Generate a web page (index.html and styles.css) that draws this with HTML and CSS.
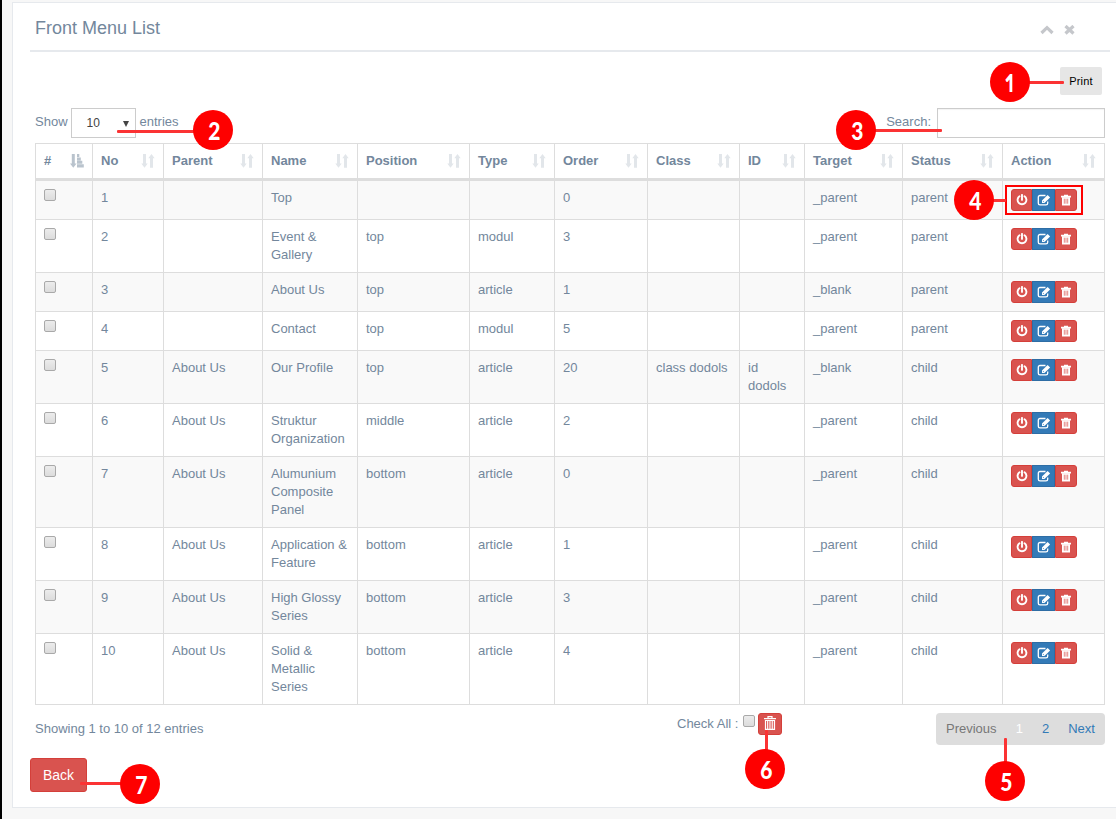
FILE: index.html
```html
<!DOCTYPE html>
<html lang="en">
<head>
<meta charset="utf-8">
<title>Front Menu List</title>
<link rel="stylesheet" href="styles.css">
</head>
<body>
<svg class="defs" width="0" height="0">
  <symbol id="sort" viewBox="0 0 14 14"><path d="M2 0h3v9.500H6.700L3.500 13.700.3 9.500H2zM9 13.700V4.200H7.300L10.500 0l3.200 4.200H12v9.500z"/></symbol>
  <symbol id="sort-asc" viewBox="0 0 14 14"><path d="M1.800 0h3v9.500h1.800L3.300 13.700 0 9.500h1.800zM7 0h2.300v3H7zM7 3.400h3.800v3H7zM7 6.800h5.300v3H7zM7 10.200h6.800v3.200H7z"/></symbol>
  <symbol id="power" viewBox="0 0 12 12"><path d="M6 .9v5M3.500 2.300a4.400 4.400 0 1 0 5 0" fill="none" stroke="#fff" stroke-width="1.900" stroke-linecap="round"/></symbol>
  <symbol id="edit" viewBox="0 0 14 12"><path d="M8.500 1.500H3A1.700 1.700 0 0 0 1.300 3.200v6A1.700 1.700 0 0 0 3 10.900h6a1.700 1.700 0 0 0 1.700-1.700V7.500" fill="none" stroke="#fff" stroke-width="1.300"/><path d="M5 6.500 10.600.9l2.500 2.500-5.600 5.600H5z" fill="#fff"/><path d="m6 7.100 1 1" stroke="#337ab7" stroke-width=".8"/></symbol>
  <symbol id="trash" viewBox="0 0 12 12"><path d="M4 1.800V.7h4v1.100h3v1.600H1V1.800z" fill="#fff"/><path d="M2 3.200h8v8.300H2z" fill="#fff"/><path d="M4.300 4.700v5M6 4.700v5M7.700 4.700v5" stroke="#d9534f" stroke-width=".7"/></symbol>
  <symbol id="bin" viewBox="0 0 12 14"><path d="M4 2V.6h4V2M0 2.600h12M1.500 4.500h9v8.900h-9z" fill="none" stroke="#fff" stroke-width="1.200"/><path d="M3.500 5v8M5.200 5v8M6.900 5v8M8.600 5v8" stroke="#fff" stroke-width=".9"/></symbol>
</svg>
<main class="panel">
  <header class="title-bar">
    <h2>Front Menu List</h2>
    <div class="tools">
      <svg width="14" height="10" viewBox="0 0 14 10"><path d="M1.500 8 7 2.700 12.500 8" fill="none" stroke="#c5c7cb" stroke-width="3.200"/></svg>
      <svg width="11" height="10" viewBox="0 0 11 10"><path d="m1.500 1 8 7.500m0-7.500-8 7.500" stroke="#c5c7cb" stroke-width="3.200"/></svg>
    </div>
  </header>
  <div class="print-row"><button class="print">Print</button></div>
  <div class="controls">
    <div class="length"><span>Show</span><span class="select"><span>10</span><i class="caret"></i></span><span>entries</span></div>
    <label class="search"><span>Search:</span><input type="text"></label>
  </div>
  <table class="grid">
    <colgroup><col class="c57"><col class="c71"><col class="c99"><col class="c95"><col class="c112"><col class="c85"><col class="c93"><col class="c92"><col class="c65"><col class="c98"><col class="c100"><col class="c102"></colgroup>
    <thead><tr id="head"></tr></thead>
    <tbody id="rows"></tbody>
  </table>
  <footer class="table-foot">
    <span class="info">Showing 1 to 10 of 12 entries</span>
    <div class="check-all"><span>Check All :</span><i class="check"></i><button class="bin"><svg width="12" height="14"><use href="#bin"/></svg></button></div>
    <nav class="pager"><span class="off">Previous</span><span class="current">1</span><span>2</span><span>Next</span></nav>
  </footer>
  <button class="back">Back</button>
</main>
<div class="mark-box"></div>
<div class="line l1"></div><div class="line l2"></div><div class="line l3"></div><div class="line l4"></div>
<div class="line v l5"></div><div class="line v l6"></div><div class="line l7"></div>
<div class="badge b1"><b class="one">1</b></div><div class="badge b2"><b>2</b></div><div class="badge b3"><b>3</b></div><div class="badge b4"><b>4</b></div>
<div class="badge b5"><b>5</b></div><div class="badge b6"><b>6</b></div><div class="badge b7"><b>7</b></div>
<script src="app.js"></script>
</body>
</html>
```
FILE: styles.css
```css
* { box-sizing: border-box; }
body { margin: 0; width: 1116px; height: 819px; overflow: hidden; padding: 2px 0 0 10px; border-left: 2px solid #000; background: #f7f7f7; color: #73879c; font: 13px/18px "Liberation Sans", Arial, sans-serif; position: relative; }
.defs { position: absolute; }
button { font-family: inherit; padding: 0; margin: 0; border: 0; }
.panel { width: 1110px; height: 806px; background: #fff; border: 1px solid #e6e9ed; padding: 0 0 0 17px; }
.title-bar { width: 1080px; height: 49px; border-bottom: 2px solid #e6e9ed; display: flex; justify-content: space-between; padding: 0 35px 0 5px; }
.title-bar h2 { margin: 14px 0 0; font-size: 18px; line-height: 22px; font-weight: 400; }
.tools { display: flex; gap: 10px; padding-top: 22px; }
.print-row { width: 1072px; height: 56px; padding-top: 15px; display: flex; justify-content: flex-end; }
.print { width: 42px; height: 28px; background: #e6e6e6; border-radius: 2px; font-size: 11px; letter-spacing: .2px; color: #000; }
.controls { width: 1070px; height: 35px; margin-left: 5px; display: flex; justify-content: space-between; }
.length, .search { display: flex; height: 30px; line-height: 27px; }
.select { display: flex; justify-content: space-between; width: 65px; height: 30px; border: 1px solid #ccc; margin: 0 4px 0 3px; padding: 0 6px 0 15px; color: #444; }
.select span { font-size: 12px; line-height: 28px; }
.caret { margin-top: 12px; height: 0; border: 3.500px solid transparent; border-top: 6px solid #444; border-bottom: 0; }
.search span { margin-right: 6px; }
.search input { width: 168px; height: 30px; border: 1px solid #ccc; padding: 0; background: #fff; box-shadow: inset 0 1px 1px rgba(0,0,0,.05); }
.grid { width: 1070px; margin-left: 5px; table-layout: fixed; border-spacing: 0; border: 0 solid #ddd; border-width: 1px 0 0 1px; }
.c57 { width: 57px } .c71 { width: 71px } .c99 { width: 99px } .c95 { width: 95px } .c112 { width: 112px } .c85 { width: 85px } .c93 { width: 93px } .c92 { width: 92px } .c65 { width: 65px } .c98 { width: 98px } .c100 { width: 100px } .c102 { width: 102px }
.grid th { height: 37px; padding: 0 8px; border-right: 1px solid #ddd; border-bottom: 3px solid #ddd; text-align: left; }
.head { display: flex; justify-content: space-between; align-items: center; height: 34px; }
.head svg { fill: #e2e6ea; width: 14px; height: 14px; }
.head svg.on { fill: #b9c3cd; }
.grid td { padding: 8px; border-right: 1px solid #ddd; border-bottom: 1px solid #ddd; vertical-align: top; }
.grid tbody tr:nth-child(odd) { background: #f9f9f9; }
.check { display: block; width: 12px; height: 12px; border: 1px solid #a9a9a9; border-radius: 2px; background: linear-gradient(#ececec, #dcdcdc); }
.actions { display: flex; width: 66px; height: 22px; }
.actions span { width: 22px; height: 22px; border: 1px solid #d43f3a; background: #d9534f; display: flex; align-items: center; justify-content: center; }
.actions span:first-child { border-radius: 3px 0 0 3px; width: 21px; }
.actions span:last-child { border-radius: 0 3px 3px 0; }
.actions .edit { width: 23px; background: #337ab7; border-color: #2e6da4; }
.table-foot { width: 1070px; height: 53px; margin-left: 5px; padding-top: 8px; display: flex; align-items: flex-start; }
.info { width: 642px; padding-top: 7px; }
.check-all { width: 259px; display: flex; }
.check-all > span { margin: 2px 5px 0 0; }
.check-all .check { margin: 2px 3px 0 0; }
.bin { width: 24px; height: 22px; background: #d9534f; border: 1px solid #d43f3a; border-radius: 3px; display: flex; justify-content: center; padding-top: 2px; }
.pager { width: 169px; height: 32px; border-radius: 4px; background: #ddd; color: #337ab7; display: flex; padding: 7px 10px; justify-content: space-between; }
.pager .off { color: #777; } .pager .current { color: #fff; }
.back { width: 57px; height: 34px; background: #d9534f; border: 1px solid #d43f3a; border-radius: 3px; color: #fff; font-size: 14px; }
.mark-box { position: absolute; left: 1003px; top: 185px; width: 78px; height: 30px; border: 2px solid #fe0000; }
.line { position: absolute; height: 3px; background: #fb3334; border-radius: 1px; }
.line.v { width: 3px; }
.l1 { left: 1020px; top: 81px; width: 42px; } .l2 { left: 115px; top: 130px; width: 80px; } .l3 { left: 870px; top: 129px; width: 70px; } .l4 { left: 988px; top: 199px; width: 16px; }
.l5 { left: 1002px; top: 738px; height: 28px; } .l6 { left: 763px; top: 730px; height: 24px; } .l7 { left: 78px; top: 782px; width: 45px; }
.badge { position: absolute; width: 40px; height: 40px; border-radius: 50%; background: #fe0000; color: #fff; display: flex; align-items: center; justify-content: center; font: 900 25px/40px Lato, sans-serif; }
.badge b { font-weight: 900; transform: translate(1px, 0) scaleX(.84); }
.badge .one { clip-path: inset(0 4.500px 13.500px 0); transform: translate(0, 2px) scale(.84, 1.220); }
.b1 { left: 988px; top: 62px; } .b2 { left: 191px; top: 110px; } .b3 { left: 834px; top: 110px; } .b4 { left: 952px; top: 180px; } .b5 { left: 983px; top: 761px; } .b6 { left: 743px; top: 749px; } .b7 { left: 118px; top: 764px; }
```
FILE: app.js
```js
const heads = ['#', 'No', 'Parent', 'Name', 'Position', 'Type', 'Order', 'Class', 'ID', 'Target', 'Status', 'Action'];
const rows = [
  ['', 'Top', '', '', '0', '', '', '_parent', 'parent'],
  ['', 'Event & Gallery', 'top', 'modul', '3', '', '', '_parent', 'parent'],
  ['', 'About Us', 'top', 'article', '1', '', '', '_blank', 'parent'],
  ['', 'Contact', 'top', 'modul', '5', '', '', '_parent', 'parent'],
  ['About Us', 'Our Profile', 'top', 'article', '20', 'class dodols', 'id dodols', '_blank', 'child'],
  ['About Us', 'Struktur Organization', 'middle', 'article', '2', '', '', '_parent', 'child'],
  ['About Us', 'Alumunium Composite Panel', 'bottom', 'article', '0', '', '', '_parent', 'child'],
  ['About Us', 'Application & Feature', 'bottom', 'article', '1', '', '', '_parent', 'child'],
  ['About Us', 'High Glossy Series', 'bottom', 'article', '3', '', '', '_parent', 'child'],
  ['About Us', 'Solid & Metallic Series', 'bottom', 'article', '4', '', '', '_parent', 'child']
];
const icon = (id, w, h) => `<svg width="${w}" height="${h}"><use href="#${id}"/></svg>`;
const actions = `<div class="actions"><span>${icon('power', 12, 12)}</span><span class="edit">${icon('edit', 14, 12)}</span><span>${icon('trash', 12, 12)}</span></div>`;
document.getElementById('head').innerHTML = heads.map((h, i) =>
  `<th><div class="head">${h}<svg class="${i ? '' : 'on'}"><use href="#${i ? 'sort' : 'sort-asc'}"/></svg></div></th>`).join('');
document.getElementById('rows').innerHTML = rows.map((r, i) =>
  `<tr><td><i class="check"></i></td><td>${i + 1}</td>` + r.map(c => `<td>${c.replace('&', '&amp;')}</td>`).join('') + `<td>${actions}</td></tr>`).join('');
```
